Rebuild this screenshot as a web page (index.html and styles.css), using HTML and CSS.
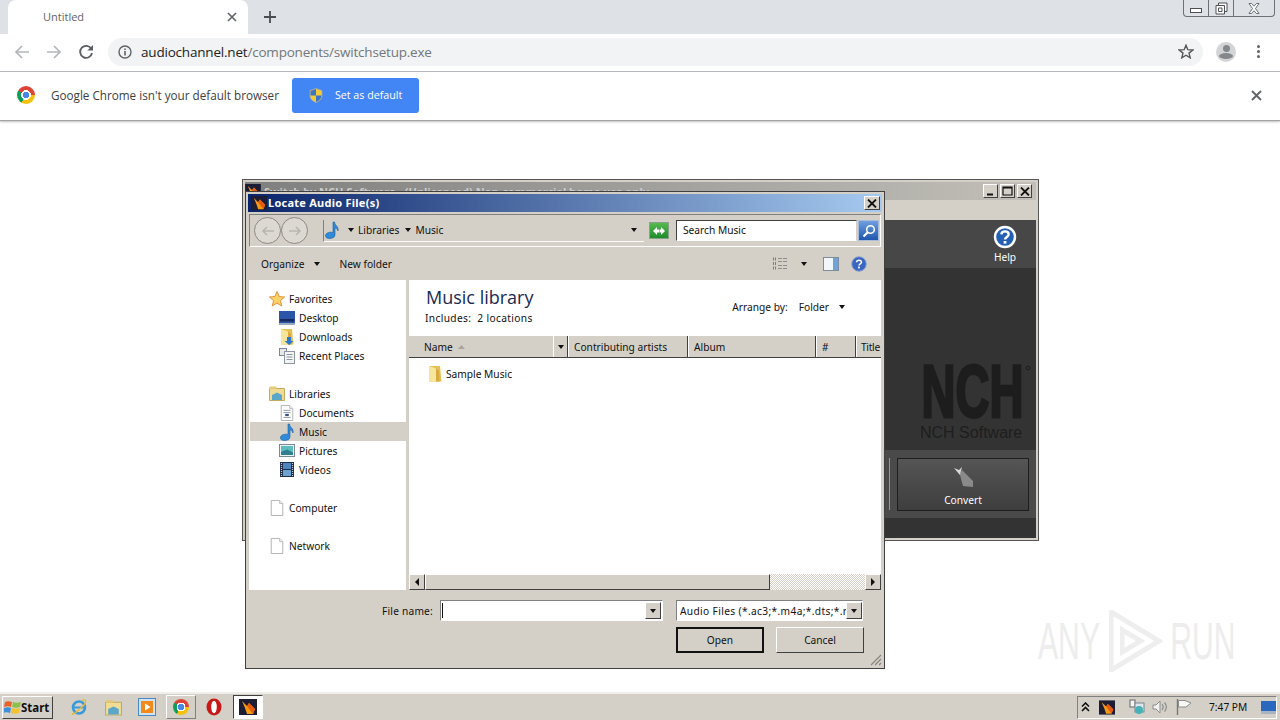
FILE: index.html
```html
<!DOCTYPE html>
<html lang="en">
<head>
  <meta charset="UTF-8">
  <title>Untitled</title>
  <link rel="stylesheet" href="styles.css">
</head>
<body>

<svg class="defs" width="0" height="0">
  <symbol id="note" viewBox="0 0 16 18">
    <path d="M9 1 L10.5 1 C11 5 15 5 14 10 C13 7.5 12 7 11 7 L11 14 C11 16.5 8 17.5 5.5 17.5 C2.5 17.5 1 16 1.5 14 C2 12 5.5 10.5 9 11.5 Z" fill="#2f8ad8" stroke="#17609f" stroke-width=".6"/>
  </symbol>
  <symbol id="folder" viewBox="0 0 16 16">
    <path d="M2 0 H13 L14.5 15.5 H2 Z" fill="#e6bf55"/>
    <path d="M2 0 L9 2.5 V15.5 H2 Z" fill="#f6e69c"/>
    <path d="M9 2.5 L12 5 L12.5 15.5 H9 Z" fill="#d9a93f"/>
  </symbol>
  <symbol id="page" viewBox="0 0 16 18">
    <path d="M1.5 .5 H11 L14.5 4 V17.5 H1.5 Z" fill="#fff" stroke="#a9a9a9"/>
    <path d="M11 .5 V4 H14.5" fill="#eee" stroke="#b9b9b9"/>
  </symbol>
  <symbol id="nch" viewBox="0 0 18 16">
    <rect width="18" height="16" fill="#1c1c34"/>
    <path d="M3 2 L8 7 L10 4 L16 10 L14 15 H8 L6 9 Z" fill="#f39a12"/>
    <path d="M8 7 L10 4 L16 10 L14 15 Z" fill="#e8590c"/>
  </symbol>
  <symbol id="help" viewBox="0 0 16 16">
    <circle cx="8" cy="8" r="7.3" fill="#3a66c0" stroke="#8ea4d2"/>
    <path d="M5.6 6.2 C5.8 3.6 10.4 3.6 10.4 6.2 C10.4 7.8 8 7.8 8 9.6" fill="none" stroke="#fff" stroke-width="1.6"/>
    <rect x="7.1" y="10.6" width="1.8" height="1.8" fill="#fff"/>
  </symbol>
  <symbol id="x-glyph" viewBox="0 0 10 9">
    <path d="M1 .5 L9 8.5 M9 .5 L1 8.5" stroke="#111" stroke-width="1.8"/>
  </symbol>
</svg>

<header class="tabstrip">
  <div class="tab">
    <span class="tab-title">Untitled</span>
    <svg class="tab-close" width="10" height="10" viewBox="0 0 10 10"><path d="M1 1 L9 9 M9 1 L1 9" stroke="#5f6368" stroke-width="1.6"/></svg>
  </div>
  <svg class="new-tab" width="12" height="12" viewBox="0 0 12 12"><path d="M6 0 V12 M0 6 H12" stroke="#4a4d51" stroke-width="1.8"/></svg>
  <div class="win-controls">
    <span class="win-btn win-min"><i></i></span>
    <span class="win-btn win-max">
      <svg width="13" height="13" viewBox="0 0 13 13"><path d="M3.5 3.5 V1 H12 V9.5 H9.5 M1 3.5 H9.5 V12 H1 Z M3.5 6 H7 V9.5 H3.5 Z" fill="#fff" stroke="#4d4f52"/></svg>
    </span>
    <span class="win-btn win-last">
      <svg width="12" height="11" viewBox="0 0 12 11"><path d="M1 .5 H3.5 L6 3.2 L8.5 .5 H11 L7.5 5.5 L11 10.5 H8.5 L6 7.8 L3.5 10.5 H1 L4.5 5.5 Z" fill="#fff" stroke="#4d4f52" stroke-width=".8"/></svg>
    </span>
  </div>
</header>

<nav class="toolbar">
  <svg class="nav-icon" width="16" height="14" viewBox="0 0 16 14"><path d="M15 7 H2 M8 1 L2 7 L8 13" fill="none" stroke="#b4b6b9" stroke-width="1.7"/></svg>
  <svg class="nav-icon" width="16" height="14" viewBox="0 0 16 14"><path d="M1 7 H14 M8 1 L14 7 L8 13" fill="none" stroke="#b4b6b9" stroke-width="1.7"/></svg>
  <svg class="nav-icon" width="16" height="16" viewBox="0 0 16 16"><path d="M13.4 5 A6 6 0 1 0 14 9" fill="none" stroke="#5a5d61" stroke-width="1.8"/><path d="M15 1 V6.6 H9.4 Z" fill="#5a5d61"/></svg>
  <div class="omnibox">
    <svg width="14" height="14" viewBox="0 0 14 14"><circle cx="7" cy="7" r="6" fill="none" stroke="#5f6368" stroke-width="1.4"/><path d="M7 6 V10.5 M7 3.4 V5" stroke="#5f6368" stroke-width="1.6"/></svg>
    <span class="url"><b>audiochannel.net</b>/components/switchsetup.exe</span>
    <svg class="star" width="16" height="15" viewBox="0 0 16 15"><path d="M8 1.2 L9.8 5.7 L14.8 6 L11 9.1 L12.2 13.8 L8 11.2 L3.8 13.8 L5 9.1 L1.2 6 L6.2 5.7 Z" fill="none" stroke="#54575b" stroke-width="1.4"/></svg>
  </div>
  <div class="avatar"><i class="avatar-head"></i><i class="avatar-body"></i></div>
  <div class="kebab"><i></i><i></i><i></i></div>
</nav>

<section class="infobar">
  <span class="chrome-logo chrome-big"></span>
  <span class="info-text">Google Chrome isn't your default browser</span>
  <div class="default-btn">
    <svg width="14" height="15" viewBox="0 0 14 15"><path d="M7 .5 L13 2.5 V8 C13 11 10 13.4 7 14.5 C4 13.4 1 11 1 8 V2.5 Z" fill="#f2cb3a" stroke="#9aa5b5" stroke-width=".8"/><path d="M7 1 V7.5 H1.5 V3 Z M7 7.5 H12.6 C12.4 10.5 10 13 7 14 Z" fill="#3c74c8"/></svg>
    <span>Set as default</span>
  </div>
  <svg class="info-close" width="11" height="11" viewBox="0 0 11 11"><path d="M1 1 L10 10 M10 1 L1 10" stroke="#5f6368" stroke-width="1.8"/></svg>
</section>

<main class="desktop">

  <!-- window behind the dialog -->
  <div class="app-window">
    <div class="app-title">
      <svg width="16" height="14"><use href="#nch"/></svg>
      <span class="app-title-text">Switch by NCH Software - (Unlicensed) Non-commercial home use only</span>
      <span class="caption-btns">
        <span class="caption-btn"><svg width="9" height="9" viewBox="0 0 9 9"><rect x="1" y="6.5" width="6" height="2" fill="#111"/></svg></span>
        <span class="caption-btn"><svg width="11" height="10" viewBox="0 0 11 10"><path d="M1 1 H10 V9 H1 Z M1 2 H10" fill="none" stroke="#111" stroke-width="1.2"/></svg></span>
        <span class="caption-btn"><svg width="10" height="9"><use href="#x-glyph"/></svg></span>
      </span>
    </div>
    <div class="app-menu"></div>
    <div class="app-head">
      <div class="help-item">
        <svg width="24" height="24" viewBox="0 0 24 24"><circle cx="12" cy="12" r="10" fill="#2461b4" stroke="#fff" stroke-width="2.4"/><path d="M8.4 9.4 C8.6 5.4 15.6 5.4 15.6 9.4 C15.6 12 12 12 12 14.6" fill="none" stroke="#fff" stroke-width="2.4"/><rect x="10.6" y="16" width="2.8" height="2.6" fill="#fff"/></svg>
        <span>Help</span>
      </div>
    </div>
    <div class="app-body">
      <div class="nch-logo">
        <svg class="nch-mark" width="112" height="54" viewBox="0 0 112 54"><text x="1.5" y="52.5" textLength="102" lengthAdjust="spacingAndGlyphs">NCH</text><circle cx="108" cy="4" r="1.8" fill="none" stroke="#1d1d1d"/></svg>
        <span class="nch-name">NCH Software</span>
      </div>
    </div>
    <div class="app-actions">
      <span class="grip"></span>
      <div class="convert-btn">
        <svg width="24" height="22" viewBox="0 0 24 22"><path d="M3 2 L9 8 L11 4 L22 15 V21 L12 20 L9 9 Z" fill="#8a8a8a"/><path d="M3 2 L8 4 L11 1 L9 9 Z" fill="#d8d8d8"/></svg>
        <span>Convert</span>
      </div>
    </div>
    <div class="app-foot"></div>
  </div>

  <!-- file dialog -->
  <div class="dialog">
    <div class="dlg-title">
      <svg width="16" height="14"><use href="#nch"/></svg>
      <span class="dlg-title-text">Locate Audio File(s)</span>
      <span class="caption-btn dlg-close"><svg width="10" height="9"><use href="#x-glyph"/></svg></span>
    </div>

    <div class="address-row">
      <span class="round-btn"><svg width="14" height="10" viewBox="0 0 14 10"><path d="M13 5 H2 M6 1 L2 5 L6 9" fill="none" stroke="#b9b6ae" stroke-width="1.6"/></svg></span>
      <span class="round-btn"><svg width="14" height="10" viewBox="0 0 14 10"><path d="M1 5 H12 M8 1 L12 5 L8 9" fill="none" stroke="#b9b6ae" stroke-width="1.6"/></svg></span>
      <div class="crumbs">
        <svg width="16" height="18"><use href="#note"/></svg>
        <i class="caret caret-first"></i><span>Libraries</span>
        <i class="caret"></i><span>Music</span>
        <i class="caret caret-end"></i>
      </div>
      <span class="refresh-btn"><svg width="14" height="10" viewBox="0 0 14 10"><path d="M1 5 L5 1 V3.5 H7 V6.5 H5 V9 Z M13 5 L9 9 V6.5 H7.5 V3.5 H9 V1 Z" fill="#fff"/></svg></span>
      <div class="search-box">Search Music</div>
      <span class="search-btn"><svg width="14" height="14" viewBox="0 0 14 14"><circle cx="8.5" cy="5.5" r="3.8" fill="none" stroke="#fff" stroke-width="1.6"/><path d="M5.5 8.5 L1.5 12.5" stroke="#fff" stroke-width="2.2"/></svg></span>
    </div>

    <div class="cmd-row">
      <span class="cmd">Organize</span><i class="caret caret-org"></i>
      <span class="cmd cmd-new">New folder</span>
      <span class="cmd-right">
        <svg width="16" height="13" viewBox="0 0 16 13"><path d="M1 2 H4 M1 6.5 H4 M1 11 H4" stroke="#7d7d7d" stroke-width="3" stroke-dasharray="1 1"/><path d="M6 1.5 H16 M6 4.5 H16 M6 8.5 H16 M6 11.5 H16" stroke="#8d8d8d" stroke-dasharray="4 1"/></svg>
        <i class="caret caret-view"></i>
        <svg width="16" height="14" viewBox="0 0 16 14"><rect x=".5" y=".5" width="15" height="13" fill="#f4f7fa" stroke="#7d8c9c"/><rect x="10" y="1" width="5" height="12" fill="#6da5d8"/></svg>
        <svg class="cmd-help" width="16" height="16"><use href="#help"/></svg>
      </span>
    </div>

    <div class="panes">
      <ul class="tree">
        <li class="tree-top"><svg width="16" height="16" viewBox="0 0 16 16"><path d="M8 .5 L10.2 5.6 L15.6 6 L11.4 9.6 L12.8 15 L8 12 L3.2 15 L4.6 9.6 L.4 6 L5.8 5.6 Z" fill="#fbd16a" stroke="#d98a2b" stroke-width=".9"/></svg>Favorites</li>
        <li><svg width="16" height="14" viewBox="0 0 16 14"><rect width="16" height="12" fill="#2a55a8"/><rect x="1" y="8" width="14" height="2.5" fill="#18285a"/><rect y="12" width="16" height="2" fill="#9aa8c0"/></svg>Desktop</li>
        <li><svg width="16" height="16" viewBox="0 0 16 16"><use href="#folder"/><path d="M8 8 H12 V12 H14.5 L10 16 L5.5 12 H8 Z" fill="#2a7ad0"/></svg>Downloads</li>
        <li><svg width="16" height="16" viewBox="0 0 16 16"><rect x=".5" y=".5" width="7" height="7" fill="#e8e8e8" stroke="#808a96"/><rect x="5.5" y="3.5" width="10" height="12" fill="#f4f4f4" stroke="#8c96a0"/><path d="M7.5 6.5 H13.5 M7.5 9 H13.5 M7.5 11.5 H13.5" stroke="#8c96a0"/></svg>Recent Places</li>
        <li class="tree-gap"></li>
        <li class="tree-top"><svg width="16" height="15" viewBox="0 0 16 15"><path d="M.5 2.5 H15.5 V14.5 H.5 Z" fill="#f1dc95" stroke="#c2a960"/><rect x=".5" y=".5" width="7" height="2.5" fill="#e6c97a"/><path d="M3 14 V9 L8 6.5 L13 9 V14 Z" fill="#5aa7c9"/></svg>Libraries</li>
        <li><svg width="14" height="16" viewBox="0 0 16 18"><use href="#page"/><path d="M4 6 H12 M4 8.5 H12 M4 14 H12" stroke="#8390a2"/><rect x="6" y="10" width="4" height="2.5" fill="#36537f"/></svg>Documents</li>
        <li class="tree-selected"><svg width="16" height="18"><use href="#note"/></svg>Music</li>
        <li><svg width="16" height="13" viewBox="0 0 16 13"><rect x=".5" y=".5" width="15" height="12" fill="#eef2f4" stroke="#7b8794"/><rect x="2" y="2" width="12" height="9" fill="#5dbcc0"/><path d="M2 8 L8 5.5 L14 8.5 V11 H2 Z" fill="#2d7f8e"/></svg>Pictures</li>
        <li><svg width="14" height="15" viewBox="0 0 14 15"><rect width="14" height="15" fill="#1f2c46"/><rect x="3" y="1" width="8" height="6" fill="#4f86c2"/><rect x="3" y="8" width="8" height="6" fill="#6aa2d2"/><path d="M1.5 1 V14 M12.5 1 V14" stroke="#bfc8d4" stroke-width="1.2" stroke-dasharray="1 1"/></svg>Videos</li>
        <li class="tree-gap"></li>
        <li class="tree-top"><svg width="14" height="16" viewBox="0 0 16 18"><use href="#page"/></svg>Computer</li>
        <li class="tree-gap"></li>
        <li class="tree-top"><svg width="14" height="16" viewBox="0 0 16 18"><use href="#page"/></svg>Network</li>
      </ul>

      <div class="files">
        <div class="lib-head">
          <div>
            <div class="lib-title">Music library</div>
            <div class="lib-sub">Includes:&nbsp; 2 locations</div>
          </div>
          <div class="arrange">
            <span>Arrange by:</span><span class="arrange-val">Folder</span><i class="caret"></i>
          </div>
        </div>
        <div class="col-head">
          <span class="col col-name">Name<svg width="7" height="4" viewBox="0 0 7 4"><path d="M3.5 0 L7 4 H0 Z" fill="#a8a59e"/></svg></span>
          <span class="col col-drop"><i class="caret"></i></span>
          <span class="col col-artist">Contributing artists</span>
          <span class="col col-album">Album</span>
          <span class="col col-num">#</span>
          <span class="col col-title">Title</span>
        </div>
        <div class="file-list">
          <div class="file-row"><svg width="16" height="16"><use href="#folder"/></svg>Sample Music</div>
        </div>
        <div class="hscroll">
          <span class="sb-btn"><i class="tri-left"></i></span>
          <span class="sb-thumb"></span>
          <span class="sb-track"></span>
          <span class="sb-btn"><i class="tri-right"></i></span>
        </div>
      </div>
    </div>

    <div class="dlg-bottom">
      <div class="name-row">
        <label>File name:</label>
        <div class="name-input"><span class="text-cursor"></span><span class="combo-btn"><i class="caret"></i></span></div>
        <div class="type-combo"><span class="type-text">Audio Files (*.ac3;*.m4a;*.dts;*.r</span><span class="combo-btn"><i class="caret"></i></span></div>
      </div>
      <div class="btn-row">
        <span class="push-btn push-default">Open</span>
        <span class="push-btn">Cancel</span>
      </div>
      <svg class="size-grip" width="12" height="12" viewBox="0 0 12 12"><path d="M11 1 L1 11 M11 5 L5 11 M11 9 L9 11" stroke="#8a8780" stroke-width="1.2"/></svg>
    </div>
  </div>

  <div class="watermark">
    <span>ANY</span>
    <svg width="95" height="62" viewBox="0 0 60 62" preserveAspectRatio="none"><path d="M4 2 L56 31 L4 60 Z M16 20 L36 31 L16 42 Z" fill="none" stroke="#eeeeee" stroke-width="5"/></svg>
    <span>RUN</span>
  </div>
</main>

<footer class="taskbar">
  <div class="start-btn">
    <svg width="17" height="15" viewBox="0 0 17 15"><path d="M1 2 C3 1 5 1 8 2 L7 7 C5 6 3 6 0 7 Z" fill="#e8622a"/><path d="M9 2 C11 3 14 3 17 2 L16 7 C13 8 11 8 8 7 Z" fill="#8cc04a"/><path d="M0 8 C3 7 5 7 7 8 L6 13 C4 12 2 12 -1 13 Z" fill="#3d8fd8"/><path d="M8 8 C10 9 13 9 16 8 L15 13 C12 14 10 14 7 13 Z" fill="#f2c230"/></svg>
    <span>Start</span>
  </div>
  <div class="task-icons">
    <span class="task-item"><svg width="18" height="18" viewBox="0 0 18 18"><circle cx="9" cy="9.5" r="6" fill="none" stroke="#3a9ad9" stroke-width="2.6"/><path d="M3 9.5 H15" stroke="#3a9ad9" stroke-width="2"/><path d="M3 15 C1 18 5 16 14 7 C17 3 16 0 11 3" fill="none" stroke="#e6b93a" stroke-width="1.3"/></svg></span>
    <span class="task-item"><svg width="17" height="17" viewBox="0 0 16 15"><path d="M.5 2.5 H15.5 V14.5 H.5 Z" fill="#f1dc95" stroke="#c2a960"/><rect x=".5" y=".5" width="7" height="2.5" fill="#e6c97a"/><path d="M3 14 V9 L8 6.5 L13 9 V14 Z" fill="#5aa7c9"/></svg></span>
    <span class="task-item"><svg width="18" height="18" viewBox="0 0 18 18"><rect x=".5" y=".5" width="17" height="17" fill="#cfe3f4" stroke="#4a8ac4"/><rect x="3" y="3" width="12" height="12" fill="#f08a1a"/><path d="M7 5.5 L12.5 9 L7 12.5 Z" fill="#fff"/></svg></span>
    <span class="task-item task-raised"><span class="chrome-logo"></span></span>
    <span class="task-item"><svg width="16" height="18" viewBox="0 0 16 18"><ellipse cx="8" cy="9" rx="7.5" ry="8.5" fill="#c81818"/><ellipse cx="8" cy="9" rx="2.8" ry="6.2" fill="#fff"/></svg></span>
    <span class="task-item task-pressed"><svg width="18" height="16"><use href="#nch"/></svg></span>
  </div>
  <div class="tray">
    <svg width="9" height="10" viewBox="0 0 9 10"><path d="M1 4.5 L4.5 1 L8 4.5 M1 9 L4.5 5.5 L8 9" fill="none" stroke="#111" stroke-width="1.6"/></svg>
    <svg class="tray-nch" width="16" height="15"><use href="#nch"/></svg>
    <svg class="tray-net" width="16" height="16" viewBox="0 0 16 16"><rect x="1" y="1" width="5" height="7" fill="#f4f4f4" stroke="#666"/><rect x="6" y="4" width="9" height="9" fill="#dfe6ea" stroke="#77858c"/><circle cx="10" cy="11" r="4" fill="#44b2b8"/></svg>
    <svg class="tray-sound" width="17" height="14" viewBox="0 0 17 14"><path d="M1 5 H4 L8 1 V13 L4 9 H1 Z" fill="#f2f2f2" stroke="#8c8c8c"/><path d="M10 4 C11.5 6 11.5 8 10 10 M12.5 2.5 C15 5.5 15 8.5 12.5 11.5" fill="none" stroke="#8c8c8c" stroke-width="1.2"/></svg>
    <svg class="tray-flag" width="16" height="16" viewBox="0 0 16 16"><path d="M1.5 0 V16" stroke="#777" stroke-width="1.4"/><path d="M2.5 1.5 H9 L15 4 L10 8 H2.5 Z" fill="#f7f7f5" stroke="#8c8c8c"/></svg>
    <span class="clock">7:47 PM</span>
    <svg class="tray-desk" width="15" height="13" viewBox="0 0 15 13"><rect width="15" height="10" fill="#2a68c0"/><rect y="10" width="15" height="3" fill="#a8b4c2"/></svg>
  </div>
</footer>

</body>
</html>
```

FILE: styles.css
```css
* {
  box-sizing: border-box;
}
html, body {
  margin: 0;
  height: 100%;
}
body {
  width: 1280px;
  height: 720px;
  overflow: hidden;
  display: flex;
  flex-direction: column;
  background: #fff;
  font-family: "Noto Sans", "Liberation Sans", sans-serif;
  font-size: 10.2px;
  color: #111;
}
svg {
  flex: none;
  display: block;
}
i {
  display: block;
  font-style: normal;
}
.defs {
  position: absolute;
}

/* browser chrome */
.tabstrip {
  height: 34px;
  flex: none;
  background: #dee1e6;
  display: flex;
  align-items: flex-end;
  padding-left: 8px;
  position: relative;
}
.tab {
  width: 240px;
  height: 34px;
  background: #fff;
  border-radius: 8px 8px 0 0;
  display: flex;
  align-items: center;
  padding: 0 11px 0 35px;
  justify-content: space-between;
}
.tab-title {
  font-family: "Open Sans", sans-serif;
  font-size: 11px;
  color: #5f6368;
  margin-bottom: 2px;
}
.new-tab {
  margin: 0 0 11px 16px;
}
.win-controls {
  position: absolute;
  right: 5px;
  top: 0;
  width: 92px;
  height: 17px;
  display: flex;
  border: 1px solid #6d7176;
  border-top: none;
  border-radius: 0 0 4px 4px;
}
.win-btn {
  width: 25px;
  flex: none;
  border-right: 1px solid #6d7176;
  display: flex;
  align-items: center;
  justify-content: center;
}
.win-btn.win-last {
  flex: 1;
  border-right: none;
}
.win-min i {
  width: 12px;
  height: 5px;
  margin-top: 4px;
  background: #fff;
  border: 1px solid #4d4f52;
}

.toolbar {
  height: 38px;
  flex: none;
  display: flex;
  align-items: center;
  background: #fff;
  border-bottom: 1px solid #b8babd;
  padding: 0 0 2px 14px;
}
.nav-icon {
  margin-right: 16px;
}
.omnibox {
  width: 1095px;
  height: 28px;
  margin-left: -2px;
  border-radius: 14px;
  background: #f1f3f4;
  display: flex;
  align-items: center;
  padding: 0 9px 0 10px;
}
.url {
  margin-left: 9px;
  font-family: "Open Sans", sans-serif;
  font-size: 13.5px;
  letter-spacing: -.2px;
  color: #73777b;
}
.url b {
  font-weight: 400;
  color: #222;
}
.star {
  margin-left: auto;
}
.avatar {
  width: 20px;
  height: 20px;
  margin-left: 13px;
  border-radius: 50%;
  background: #d3d4d6;
  display: flex;
  flex-direction: column;
  align-items: center;
  overflow: hidden;
}
.avatar-head {
  width: 7px;
  height: 7px;
  margin-top: 3px;
  border-radius: 50%;
  background: #85888b;
}
.avatar-body {
  width: 14px;
  height: 6px;
  margin-top: 1px;
  border-radius: 50%;
  background: #85888b;
}
.kebab {
  margin-left: 21px;
  display: flex;
  flex-direction: column;
  gap: 2px;
}
.kebab i {
  width: 3px;
  height: 3px;
  background: #5f6368;
  border-radius: 50%;
}

.infobar {
  height: 49px;
  flex: none;
  display: flex;
  align-items: center;
  padding: 0 18px 2px 17px;
  background: #fff;
  border-bottom: 1px solid #a0a2a4;
  box-shadow: 0 1px 2px rgba(0,0,0,0.25);
  position: relative;
  z-index: 1;
}
.chrome-logo {
  display: block;
  width: 16px;
  height: 16px;
  border-radius: 50%;
  background:
    radial-gradient(circle, #4a86e8 0 26%, #fff 27% 38%, transparent 39%),
    conic-gradient(#db4437 0 90deg, #f4c20d 90deg 210deg, #0f9d58 210deg 300deg, #db4437 300deg);
}
.chrome-big {
  width: 18px;
  height: 18px;
}
.info-text {
  margin-left: 16px;
  font-family: "Open Sans", sans-serif;
  font-size: 11.7px;
  color: #3c4043;
}
.default-btn {
  width: 127px;
  height: 35px;
  margin-left: 13px;
  background: #4285f4;
  border-radius: 3px;
  display: flex;
  align-items: center;
  padding-left: 17px;
  gap: 12px;
  color: #fff;
  font-family: "Open Sans", sans-serif;
  font-size: 10.7px;
}
.info-close {
  margin-left: auto;
}

/* desktop area: windows sit on a free canvas */
.desktop {
  flex: 1;
  position: relative;
  background: #fff;
}
.app-window {
  position: absolute;
  left: 242px;
  top: 58px;
  width: 797px;
  height: 362px;
  display: flex;
  flex-direction: column;
  background: #d4d0c8;
  border: 3px solid #d4d0c8;
  outline: 1px solid #555;
  outline-offset: -1px;
}
.app-title {
  height: 18px;
  flex: none;
  display: flex;
  align-items: center;
  gap: 3px;
  background: linear-gradient(90deg, #7f7f7f, #c2bfb8);
  color: #ccc;
  font-weight: 700;
  font-size: 11px;
  overflow: hidden;
}
.app-title-text {
  white-space: nowrap;
}
.caption-btns {
  margin-left: auto;
  display: flex;
  gap: 2px;
  margin-right: 4px;
}
.caption-btn {
  width: 15px;
  height: 14px;
  display: flex;
  align-items: center;
  justify-content: center;
  background: #d4d0c8;
  border: 1px solid;
  border-color: #fff #404040 #404040 #fff;
}
.app-menu {
  height: 20px;
  flex: none;
}
.app-head {
  height: 48px;
  flex: none;
  background: #474747;
  display: flex;
  justify-content: flex-end;
  padding-right: 19px;
}
.help-item {
  display: flex;
  flex-direction: column;
  align-items: center;
  padding-top: 5px;
  gap: 1px;
  color: #fff;
}
.app-body {
  flex: 1;
  background: #333;
  display: flex;
  justify-content: flex-end;
  padding: 96px 4px 0 0;
}
.nch-logo {
  width: 112px;
  display: flex;
  flex-direction: column;
}
.nch-mark {
  overflow: visible;
}
.nch-mark text {
  font-family: "Liberation Sans", Arial, sans-serif;
  font-size: 74px;
  font-weight: 700;
  fill: #1d1d1d;
  stroke: #1d1d1d;
  stroke-width: 3px;
}
.nch-name {
  margin-top: 6px;
  font-family: "Liberation Sans", Arial, sans-serif;
  font-size: 16px;
  color: #1e1e1e;
  white-space: nowrap;
}
.app-actions {
  height: 68px;
  flex: none;
  background: #4a4a4a;
  display: flex;
  align-items: center;
  justify-content: flex-end;
  padding-right: 7px;
  gap: 5px;
}
.grip {
  width: 3px;
  height: 52px;
  border-left: 1px solid #999;
}
.convert-btn {
  width: 132px;
  height: 53px;
  border: 1px solid #1e1e1e;
  background: linear-gradient(#555, #3e3e3e);
  display: flex;
  flex-direction: column;
  align-items: center;
  padding-top: 7px;
  gap: 5px;
  color: #fff;
}
.app-foot {
  height: 20px;
  flex: none;
  background: #333;
}

/* file dialog */
.dialog {
  position: absolute;
  left: 245px;
  top: 70px;
  width: 640px;
  height: 478px;
  display: flex;
  flex-direction: column;
  background: #d4d0c8;
  border: 3px solid #d4d0c8;
  outline: 1px solid #404040;
  outline-offset: -1px;
}
.dlg-title {
  height: 18px;
  flex: none;
  display: flex;
  align-items: center;
  gap: 1px;
  padding: 0 2px 0 3px;
  background: linear-gradient(90deg, #0a246a, #a6caf0);
  color: #fff;
  font-size: 11px;
  font-weight: 700;
}
.dlg-title-text {
  letter-spacing: .25px;
  margin-bottom: 1px;
}
.dlg-close {
  margin-left: auto;
  width: 16px;
}
.address-row {
  height: 33px;
  flex: none;
  margin: 2px 1px 0 1px;
  display: flex;
  align-items: center;
  padding: 0 1px 0 4px;
  border: 1px solid;
  border-color: #808080 #fff #fff #808080;
}
.round-btn {
  width: 27px;
  height: 27px;
  border-radius: 50%;
  border: 1px solid #8d8a84;
  background: #dcd9d2;
  display: flex;
  align-items: center;
  justify-content: center;
}
.crumbs {
  width: 321px;
  height: 22px;
  margin-left: 15px;
  display: flex;
  align-items: center;
  border-left: 1px solid #808080;
  border-bottom: 1px solid #fff;
}
.caret {
  width: 0;
  height: 0;
  border: 3.5px solid transparent;
  border-top: 4px solid #111;
  border-bottom: none;
}
.crumbs .caret {
  margin: 0 4px 0 6px;
}
.crumbs .caret-first {
  margin-left: 8px;
}
.crumbs .caret-end {
  margin: 0 7px 0 auto;
}
.refresh-btn {
  width: 20px;
  height: 17px;
  margin-left: 5px;
  border: 1px solid #8aa08a;
  background: linear-gradient(#57b94f, #1e8c2c);
  display: flex;
  align-items: center;
  justify-content: center;
}
.search-box {
  width: 181px;
  height: 21px;
  margin-left: 7px;
  background: #fff;
  border: 1px solid;
  border-color: #404040 #d4d0c8 #fff #404040;
  padding: 2px 6px;
}
.search-btn {
  width: 21px;
  height: 21px;
  margin-left: 1px;
  border: 1px solid #a9bdd8;
  background: linear-gradient(#6f9fe0, #1f57b0);
  display: flex;
  align-items: center;
  justify-content: center;
}
.cmd-row {
  height: 33px;
  flex: none;
  display: flex;
  align-items: center;
  padding-left: 13px;
}
.caret-org {
  margin: 0 0 0 9px;
}
.cmd-new {
  margin-left: 20px;
}
.cmd-right {
  margin-left: auto;
  display: flex;
  align-items: center;
  padding-right: 15px;
}
.caret-view {
  margin: 0 16px 0 13px;
}
.cmd-help {
  margin-left: 12px;
}
.panes {
  height: 310px;
  flex: none;
  display: flex;
  gap: 3px;
  margin: 0 1px;
}
.tree {
  width: 157px;
  flex: none;
  list-style: none;
  margin: 0;
  padding: 9px 0 0 1px;
  background: #fff;
}
.tree li {
  height: 19px;
  display: flex;
  align-items: center;
  padding-left: 29px;
  gap: 4px;
}
.tree li svg {
  width: 16px;
}
.tree li.tree-top {
  padding-left: 19px;
}
.tree li.tree-gap {
  padding: 0;
}
.tree li.tree-selected {
  background: #d4d0c8;
}
.files {
  flex: 1;
  display: flex;
  flex-direction: column;
  background: #fff;
  min-width: 0;
}
.lib-head {
  height: 56px;
  flex: none;
  display: flex;
  justify-content: space-between;
  padding: 6px 36px 0 17px;
}
.lib-title {
  font-family: "Open Sans", sans-serif;
  font-size: 18px;
  line-height: 23px;
  color: #1a2a50;
}
.lib-sub {
  margin: 2px 0 0 -1px;
  letter-spacing: .35px;
}
.arrange {
  display: flex;
  align-items: center;
  gap: 11px;
  height: 28px;
  margin-top: 7px;
}
.arrange .caret {
  margin-left: -1px;
}
.col-head {
  height: 22px;
  flex: none;
  display: flex;
  background: #d4d0c8;
  border-bottom: 1px solid #404040;
}
.col {
  display: flex;
  align-items: center;
  padding-left: 5px;
  border-right: 1px solid #404040;
  box-shadow: 1px 0 0 #fff;
  margin-right: 1px;
  white-space: nowrap;
  overflow: hidden;
}
.col-name {
  width: 144px;
  padding-left: 15px;
  gap: 5px;
  border-right: none;
}
.col-drop {
  width: 14px;
  padding-left: 4px;
}
.col-artist {
  width: 119px;
}
.col-album {
  width: 127px;
}
.col-num {
  width: 39px;
}
.col-title {
  flex: 1;
  margin-right: 0;
  padding-left: 4px;
  letter-spacing: -.3px;
  border-right: none;
  box-shadow: none;
}
.file-list {
  flex: 1;
  padding-top: 6px;
}
.file-row {
  height: 19px;
  display: flex;
  align-items: center;
  gap: 3px;
  padding-left: 18px;
}
.hscroll {
  height: 16px;
  flex: none;
  display: flex;
}
.sb-btn {
  width: 16px;
  flex: none;
  background: #d4d0c8;
  border: 1px solid;
  border-color: #fff #404040 #404040 #fff;
  display: flex;
  align-items: center;
  justify-content: center;
}
.sb-thumb {
  width: 345px;
  flex: none;
  background: #d4d0c8;
  border: 1px solid;
  border-color: #fff #404040 #404040 #fff;
}
.sb-track {
  flex: 1;
  background: repeating-conic-gradient(#d4d0c8 0 25%, #fff 0 50%) 0 0 / 2px 2px;
}
.tri-left, .tri-right {
  width: 0;
  height: 0;
  border: 4px solid transparent;
}
.tri-left {
  border-right: 4px solid #111;
  border-left: none;
}
.tri-right {
  border-left: 4px solid #111;
  border-right: none;
}
.dlg-bottom {
  flex: 1;
  position: relative;
  padding-top: 10px;
}
.name-row {
  display: flex;
  align-items: center;
  height: 21px;
  padding-left: 130px;
}
.name-row label {
  width: 55px;
  flex: none;
  text-align: right;
  letter-spacing: .2px;
  white-space: nowrap;
}
.name-input {
  width: 223px;
  height: 21px;
  margin-left: 7px;
  flex: none;
  background: #fff;
  border: 1px solid;
  border-color: #808080 #fff #fff #808080;
  display: flex;
  align-items: center;
  justify-content: space-between;
  padding: 0 1px;
}
.text-cursor {
  width: 1px;
  height: 15px;
  background: #111;
}
.combo-btn {
  width: 16px;
  height: 17px;
  flex: none;
  background: #d4d0c8;
  border: 1px solid;
  border-color: #fff #404040 #404040 #fff;
  display: flex;
  align-items: center;
  justify-content: center;
}
.type-combo {
  width: 187px;
  height: 21px;
  margin-left: 13px;
  flex: none;
  background: #fff;
  border: 1px solid;
  border-color: #808080 #fff #fff #808080;
  display: flex;
  align-items: center;
  padding-left: 3px;
  letter-spacing: .35px;
  overflow: hidden;
}
.type-text {
  flex: 1;
  white-space: nowrap;
  overflow: hidden;
}
.btn-row {
  display: flex;
  gap: 12px;
  margin-top: 6px;
  padding-left: 428px;
}
.push-btn {
  width: 88px;
  height: 26px;
  background: #d4d0c8;
  border: 1px solid;
  border-color: #fff #404040 #404040 #fff;
  display: flex;
  align-items: center;
  justify-content: center;
}
.push-default {
  border: 2px solid #111;
}
.size-grip {
  position: absolute;
  right: 0;
  bottom: 0;
}

/* watermark */
.watermark {
  position: absolute;
  left: 1038px;
  top: 489px;
  display: flex;
  align-items: center;
  gap: 13px;
  font-family: "Liberation Sans", Arial, sans-serif;
  font-size: 52px;
  color: #ededed;
  transform: scaleX(.58);
  transform-origin: left center;
}

/* taskbar */
.taskbar {
  height: 28px;
  flex: none;
  display: flex;
  align-items: center;
  background: #d4d0c8;
  border-top: 2px solid #efeee9;
  padding-left: 2px;
  position: relative;
}
.start-btn {
  width: 51px;
  height: 23px;
  display: flex;
  align-items: center;
  padding-left: 1px;
  background: #d4d0c8;
  border: 1px solid;
  border-color: #fff #404040 #404040 #fff;
  font-size: 11.5px;
  font-weight: 700;
}
.task-icons {
  display: flex;
  margin-left: 11px;
  gap: 4px;
}
.task-item {
  width: 30px;
  height: 24px;
  display: flex;
  align-items: center;
  justify-content: center;
}
.task-raised {
  margin-right: -1px;
  border: 1px solid;
  border-color: #fff #808080 #808080 #fff;
}
.task-pressed {
  background: #fff;
  border: 1px solid;
  border-color: #404040 #fff #fff #404040;
}
.tray {
  margin-left: auto;
  margin-right: 3px;
  width: 200px;
  height: 23px;
  display: flex;
  align-items: center;
  padding-left: 3px;
  border: 1px solid;
  border-color: #808080 #fff #fff #808080;
}
.tray-nch {
  margin-left: 9px;
}
.tray-net {
  margin-left: 14px;
}
.tray-sound {
  margin-left: 7px;
}
.tray-flag {
  margin-left: 7px;
}
.clock {
  margin-left: 17px;
  white-space: nowrap;
}
.tray-desk {
  margin-left: auto;
}
```
